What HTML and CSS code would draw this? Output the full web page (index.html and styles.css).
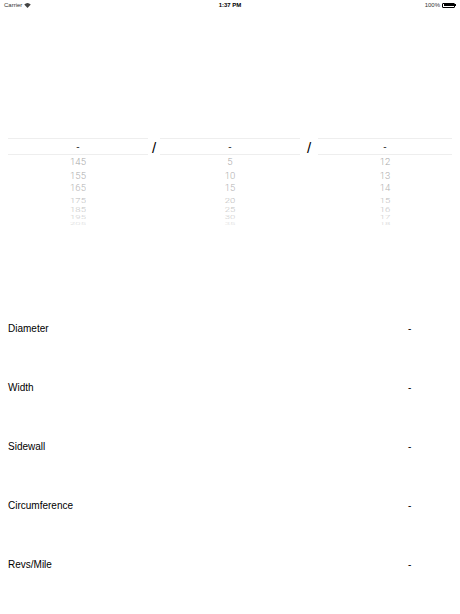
FILE: index.html
```html
<!DOCTYPE html>
<html>
<head>
<meta charset="utf-8">
<link rel="stylesheet" href="styles.css">
</head>
<body>
<div class="status">
  <div class="status-left">Carrier <svg class="wifi" width="7" height="5" viewBox="0 0 14 10"><path d="M7 10 L0.5 3.2 A9.5 9.5 0 0 1 13.5 3.2 Z" fill="#444"/></svg></div>
  <div class="status-time">1:37 PM</div>
  <div class="status-right">100% <span class="battery"><span class="battery-fill"></span></span><span class="battery-tip"></span></div>
</div>

<div class="pickers">
  <div class="picker">
    <div class="sel">-</div>
    <div class="wheel">
      <div class="i i1">145</div>
      <div class="i i2">155</div>
      <div class="i i3">165</div>
      <div class="i i4">175</div>
      <div class="i i5">185</div>
      <div class="i i6">195</div>
      <div class="i i7">205</div>
    </div>
  </div>
  <div class="slash">/</div>
  <div class="picker">
    <div class="sel">-</div>
    <div class="wheel">
      <div class="i i1">5</div>
      <div class="i i2">10</div>
      <div class="i i3">15</div>
      <div class="i i4">20</div>
      <div class="i i5">25</div>
      <div class="i i6">30</div>
      <div class="i i7">35</div>
    </div>
  </div>
  <div class="slash">/</div>
  <div class="picker">
    <div class="sel">-</div>
    <div class="wheel">
      <div class="i i1">12</div>
      <div class="i i2">13</div>
      <div class="i i3">14</div>
      <div class="i i4">15</div>
      <div class="i i5">16</div>
      <div class="i i6">17</div>
      <div class="i i7">18</div>
    </div>
  </div>
</div>

<div class="results">
  <div class="row"><span class="name">Diameter</span><span class="val">-</span></div>
  <div class="row"><span class="name">Width</span><span class="val">-</span></div>
  <div class="row"><span class="name">Sidewall</span><span class="val">-</span></div>
  <div class="row"><span class="name">Circumference</span><span class="val">-</span></div>
  <div class="row"><span class="name">Revs/Mile</span><span class="val">-</span></div>
</div>
</body>
</html>
```

FILE: styles.css
```css
html, body {
  margin: 0;
  padding: 0;
  background: #fff;
  font-family: "Liberation Sans", Arial, sans-serif;
  color: #000;
}
body {
  width: 460px;
  height: 614px;
  overflow: hidden;
}
.status {
  height: 10px;
  display: flex;
  align-items: center;
  justify-content: space-between;
  padding: 0 4px 0 4px;
  font-size: 6px;
  position: relative;
}
.status-left {
  color: #333;
  display: flex;
  align-items: center;
  gap: 2px;
}
.status-time {
  position: absolute;
  left: 0;
  right: 0;
  text-align: center;
  font-weight: bold;
}
.status-right {
  display: flex;
  align-items: center;
  gap: 2px;
  color: #333;
}
.battery {
  display: inline-block;
  width: 13px;
  height: 5px;
  border: 0.5px solid #000;
  border-radius: 1px;
  padding: 0.5px;
  box-sizing: border-box;
}
.battery-fill {
  display: block;
  width: 100%;
  height: 100%;
  background: #000;
}
.battery-tip {
  display: inline-block;
  width: 1px;
  height: 2px;
  background: #000;
  margin-left: -2px;
}
.pickers {
  margin-top: 128px;
  display: grid;
  grid-template-columns: 140px 12px 140px 18px 134px;
  padding-left: 8px;
}
.picker {
  display: flex;
  flex-direction: column;
}
.sel {
  height: 17px;
  border-top: 1px solid #eeeeee;
  border-bottom: 1px solid #eeeeee;
  box-sizing: border-box;
  text-align: center;
  font-size: 10px;
  line-height: 15px;
  color: #333;
}
.slash {
  font-size: 15px;
  line-height: 17px;
  text-align: center;
  padding-top: 1px;
}
.wheel {
  display: flex;
  flex-direction: column;
  align-items: center;
  font-family: Roboto, "Liberation Sans", sans-serif;
  font-weight: 300;
}
.i {
  font-size: 9.5px;
  text-align: center;
  transform-origin: center center;
}
.i1 { height: 14px; line-height: 14px; color: #a8a8a8; }
.i2 { height: 13px; line-height: 13px; color: #acacac; }
.i3 { height: 12px; line-height: 12px; color: #b2b2b2; transform: scaleY(0.95); }
.i4 { height: 12px; line-height: 12px; color: #bababa; transform: scaleY(0.85); }
.i5 { height: 8px; line-height: 8px; color: #c4c4c4; transform: scaleY(0.7); }
.i6 { height: 7px; line-height: 7px; color: #cecece; transform: scaleY(0.5); }
.i7 { height: 6px; line-height: 6px; color: #dadada; transform: scaleY(0.3); }
.results {
  margin-top: 96px;
  display: flex;
  flex-direction: column;
  padding: 0 8px;
}
.row {
  height: 59px;
  display: flex;
  align-items: flex-start;
  font-size: 10px;
  line-height: 12px;
}
.name {
  width: 400px;
}
.val {
  width: 10px;
}
```
